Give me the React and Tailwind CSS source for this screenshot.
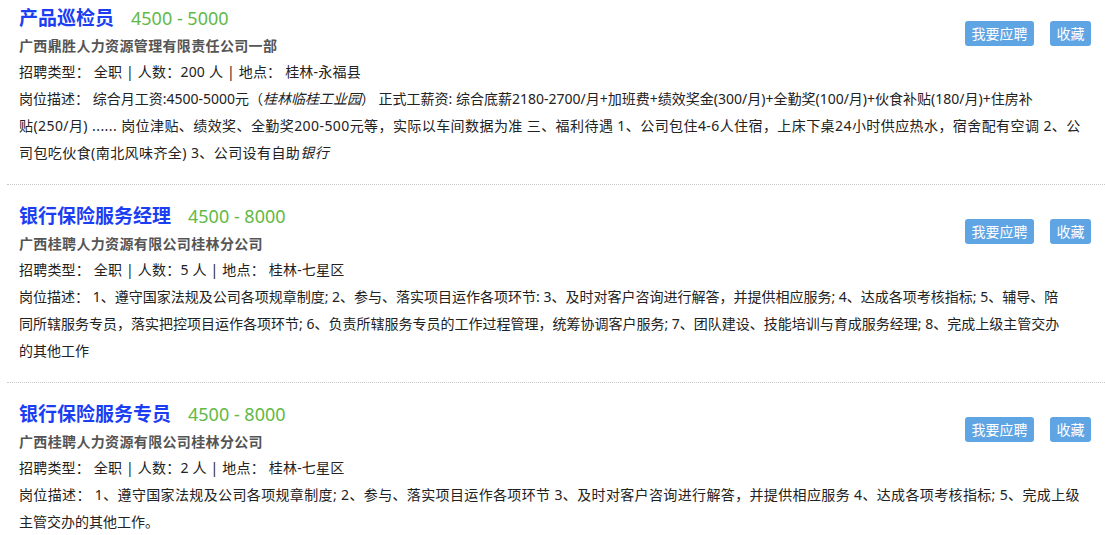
import React from "react";

const jobs = [
  {
    title: "产品巡检员",
    salary: "4500 - 5000",
    company: "广西鼎胜人力资源管理有限责任公司一部",
    count: "200",
    place: "桂林-永福县",
    desc: [
      {
        cls: "tracking-[0px]",
        body: (
          <>
            岗位描述： 综合月工资:4500-5000元（<i>桂林临桂工业园</i>） 正式工薪资: 综合底薪2180-2700/月+加班费+绩效奖金(300/月)+全勤奖(100/月)+伙食补贴(180/月)+住房补
          </>
        ),
      },
      {
        cls: "tracking-[0.42px]",
        body: <>贴(250/月) ...... 岗位津贴、绩效奖、全勤奖200-500元等，实际以车间数据为准 三、福利待遇 1、公司包住4-6人住宿，上床下桌24小时供应热水，宿舍配有空调 2、公</>,
      },
      {
        cls: "tracking-[0.42px]",
        body: (
          <>
            司包吃伙食(南北风味齐全) 3、公司设有自助<i>银行</i>
          </>
        ),
      },
    ],
  },
  {
    title: "银行保险服务经理",
    salary: "4500 - 8000",
    company: "广西桂聘人力资源有限公司桂林分公司",
    count: "5",
    place: "桂林-七星区",
    desc: [
      {
        cls: "tracking-[0px]",
        body: <>岗位描述： 1、遵守国家法规及公司各项规章制度; 2、参与、落实项目运作各项环节: 3、及时对客户咨询进行解答，并提供相应服务; 4、达成各项考核指标; 5、辅导、陪</>,
      },
      {
        cls: "tracking-[0px]",
        body: <>同所辖服务专员，落实把控项目运作各项环节; 6、负责所辖服务专员的工作过程管理，统筹协调客户服务; 7、团队建设、技能培训与育成服务经理; 8、完成上级主管交办</>,
      },
      { cls: "tracking-[0px]", body: <>的其他工作</> },
    ],
  },
  {
    title: "银行保险服务专员",
    salary: "4500 - 8000",
    company: "广西桂聘人力资源有限公司桂林分公司",
    count: "2",
    place: "桂林-七星区",
    desc: [
      {
        cls: "tracking-[0.36px]",
        body: <>岗位描述： 1、遵守国家法规及公司各项规章制度; 2、参与、落实项目运作各项环节 3、及时对客户咨询进行解答，并提供相应服务 4、达成各项考核指标; 5、完成上级</>,
      },
      { cls: "tracking-[0px]", body: <>主管交办的其他工作。</> },
    ],
  },
];

function Job({ job, first }) {
  return (
    <div className={first ? "pt-[3px]" : "pt-[16px]"}>
      <div className="flex items-start pl-[19px] pr-[14px]">
        <div className="flex-1">
          <div className="flex items-baseline h-[30px] leading-[30px]">
            <span className="text-[19px] font-bold text-[#1b3ef2]">{job.title}</span>
            <span className="ml-[17px] text-[18px] text-[#62b946]">{job.salary}</span>
          </div>
          <div className="h-[26px] leading-[26px] text-[14px] font-bold tracking-[0.35px] text-[#555555]">
            {job.company}
          </div>
          <div className="h-[26px] leading-[26px] text-[14px] tracking-[0.2px] text-[#222222] whitespace-nowrap">
            招聘类型： 全职 | 人数：{job.count} 人 | 地点： {job.place}
          </div>
        </div>
        <div className="flex gap-[16px] mt-[18px]">
          <button className="w-[69px] h-[25px] leading-[25px] rounded-[3px] bg-[#5fa5e3] text-white text-[14px]">
            我要应聘
          </button>
          <button className="w-[41px] h-[25px] leading-[25px] rounded-[3px] bg-[#5fa5e3] text-white text-[14px]">
            收藏
          </button>
        </div>
      </div>
      <div className="pl-[19px] text-[14px] text-[#222222]">
        {job.desc.map((line, i) => (
          <div key={i} className={"h-[27px] leading-[27px] whitespace-nowrap " + line.cls}>
            {line.body}
          </div>
        ))}
      </div>
      <div className="mt-[18px] ml-[7px] border-t border-dotted border-[#c8c8c8]" />
    </div>
  );
}

export default function App() {
  return (
    <div className="w-[1105px] h-[535px] overflow-hidden bg-white font-['Noto_Sans','Noto_Sans_CJK_SC',sans-serif]">
      {jobs.map((job, i) => (
        <Job key={i} job={job} first={i === 0} />
      ))}
    </div>
  );
}
